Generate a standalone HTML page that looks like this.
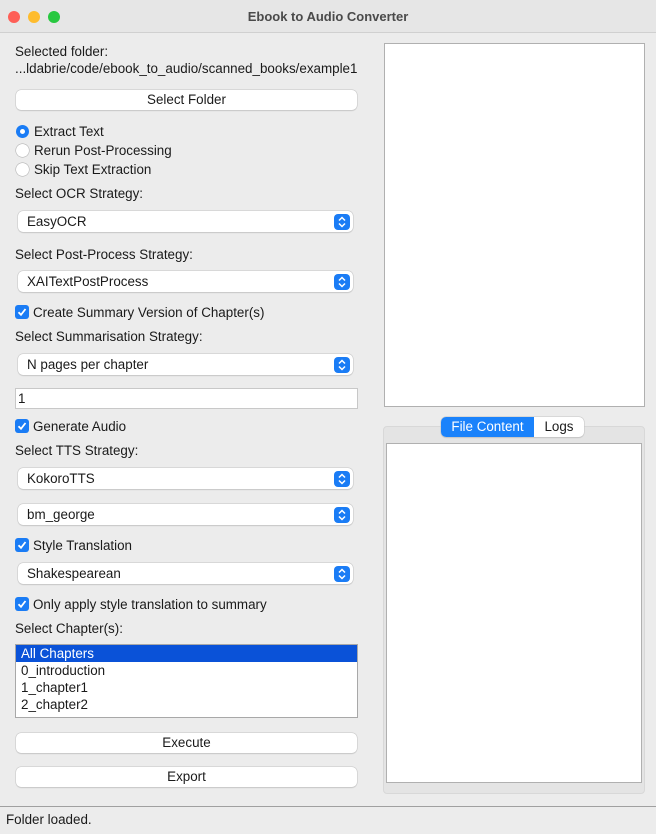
<!DOCTYPE html>
<html><head><style>
*{box-sizing:border-box;margin:0;padding:0}
body{width:656px;height:834px;background:#ececec;font-family:"Liberation Sans",sans-serif;font-size:13.4px;color:#1a1a1a;position:relative;overflow:hidden}
.a{position:absolute;white-space:nowrap}
.title{left:0;top:0;width:656px;height:33px;background:#e6e6e6;border-bottom:1px solid #d0d0d0}
.dot{position:absolute;top:11px;width:12px;height:12px;border-radius:50%}
.btn{background:#fff;border-radius:5px;box-shadow:0 0 0 .5px #c4c4c4,0 1px 1px rgba(0,0,0,.15);text-align:center;line-height:20px}
.combo{background:#fff;border-radius:5px;box-shadow:0 0 0 .5px #c4c4c4,0 1px 1px rgba(0,0,0,.15);line-height:21px;padding-left:9px}
.arr{position:absolute;right:3px;top:3px;width:16px;height:16px;background:#1a7cf5;border-radius:4px}
.radio{width:13px;height:13px;border-radius:50%;background:#fff;box-shadow:0 0 0 .5px #aaa}
.radio.on{background:#1a7cf5;box-shadow:none}
.radio.on::after{content:"";position:absolute;left:4px;top:4px;width:5px;height:5px;border-radius:50%;background:#fff}
.cb{width:14px;height:14px;border-radius:3px;background:#1a7cf5}
.box{background:#fff;border:1px solid #b8b8b8}
</style></head><body>
<div class="a title"></div>
<div class="dot" style="left:8px;background:#fe5f57"></div>
<div class="dot" style="left:28px;background:#febc2e"></div>
<div class="dot" style="left:48px;background:#28c840"></div>
<div class="a" style="left:0;width:656px;text-align:center;top:9px;font-weight:bold;color:#4a4a4a;font-size:13px">Ebook to Audio Converter</div>

<div class="a" style="left:15px;top:44px">Selected folder:</div>
<div class="a" style="left:15px;top:61px">...ldabrie/code/ebook_to_audio/scanned_books/example1</div>
<div class="a btn" style="left:16px;top:90px;width:341px;height:20px">Select Folder</div>

<div class="a radio on" style="left:16px;top:125px"></div><div class="a" style="left:34px;top:124px">Extract Text</div>
<div class="a radio" style="left:16px;top:144px"></div><div class="a" style="left:34px;top:143px">Rerun Post-Processing</div>
<div class="a radio" style="left:16px;top:163px"></div><div class="a" style="left:34px;top:162px">Skip Text Extraction</div>

<div class="a" style="left:15px;top:186px">Select OCR Strategy:</div>
<div class="a combo" style="left:18px;top:211px;width:335px;height:21px">EasyOCR<svg class="arr" viewBox="0 0 16 16"><path d="M5 6.5L8 3.5L11 6.5M5 9.5L8 12.5L11 9.5" stroke="#fff" stroke-width="1.5" fill="none"/></svg></div>
<div class="a" style="left:15px;top:247px">Select Post-Process Strategy:</div>
<div class="a combo" style="left:18px;top:271px;width:335px;height:21px">XAITextPostProcess<svg class="arr" viewBox="0 0 16 16"><path d="M5 6.5L8 3.5L11 6.5M5 9.5L8 12.5L11 9.5" stroke="#fff" stroke-width="1.5" fill="none"/></svg></div>

<svg class="a cb" style="left:15px;top:305px" viewBox="0 0 14 14"><path d="M3.5 7.2L6 9.8L10.5 4" stroke="#fff" stroke-width="1.8" fill="none"/></svg>
<div class="a" style="left:33px;top:305px">Create Summary Version of Chapter(s)</div>
<div class="a" style="left:15px;top:329px">Select Summarisation Strategy:</div>
<div class="a combo" style="left:18px;top:354px;width:335px;height:21px">N pages per chapter<svg class="arr" viewBox="0 0 16 16"><path d="M5 6.5L8 3.5L11 6.5M5 9.5L8 12.5L11 9.5" stroke="#fff" stroke-width="1.5" fill="none"/></svg></div>
<div class="a box" style="left:15px;top:388px;width:343px;height:21px;padding-left:2px;line-height:19px;border-color:#c8c8c8">1</div>

<svg class="a cb" style="left:15px;top:419px" viewBox="0 0 14 14"><path d="M3.5 7.2L6 9.8L10.5 4" stroke="#fff" stroke-width="1.8" fill="none"/></svg>
<div class="a" style="left:33px;top:419px">Generate Audio</div>
<div class="a" style="left:15px;top:443px">Select TTS Strategy:</div>
<div class="a combo" style="left:18px;top:468px;width:335px;height:21px">KokoroTTS<svg class="arr" viewBox="0 0 16 16"><path d="M5 6.5L8 3.5L11 6.5M5 9.5L8 12.5L11 9.5" stroke="#fff" stroke-width="1.5" fill="none"/></svg></div>
<div class="a combo" style="left:18px;top:504px;width:335px;height:21px">bm_george<svg class="arr" viewBox="0 0 16 16"><path d="M5 6.5L8 3.5L11 6.5M5 9.5L8 12.5L11 9.5" stroke="#fff" stroke-width="1.5" fill="none"/></svg></div>
<svg class="a cb" style="left:15px;top:538px" viewBox="0 0 14 14"><path d="M3.5 7.2L6 9.8L10.5 4" stroke="#fff" stroke-width="1.8" fill="none"/></svg>
<div class="a" style="left:33px;top:538px">Style Translation</div>
<div class="a combo" style="left:18px;top:563px;width:335px;height:21px">Shakespearean<svg class="arr" viewBox="0 0 16 16"><path d="M5 6.5L8 3.5L11 6.5M5 9.5L8 12.5L11 9.5" stroke="#fff" stroke-width="1.5" fill="none"/></svg></div>
<svg class="a cb" style="left:15px;top:597px" viewBox="0 0 14 14"><path d="M3.5 7.2L6 9.8L10.5 4" stroke="#fff" stroke-width="1.8" fill="none"/></svg>
<div class="a" style="left:33px;top:597px">Only apply style translation to summary</div>
<div class="a" style="left:15px;top:621px">Select Chapter(s):</div>
<div class="a box" style="left:15px;top:644px;width:343px;height:74px;border-color:#a8a8a8">
<div style="background:#0a52d8;color:#fff;height:17px;line-height:17px;padding-left:5px">All Chapters</div>
<div style="height:17px;line-height:17px;padding-left:5px">0_introduction</div>
<div style="height:17px;line-height:17px;padding-left:5px">1_chapter1</div>
<div style="height:17px;line-height:17px;padding-left:5px">2_chapter2</div>
</div>
<div class="a btn" style="left:16px;top:733px;width:341px;height:20px">Execute</div>
<div class="a btn" style="left:16px;top:767px;width:341px;height:20px">Export</div>

<div class="a box" style="left:384px;top:43px;width:261px;height:364px;border-color:#b0b0b0"></div>
<div class="a" style="left:383px;top:426px;width:262px;height:368px;background:#e4e4e4;border:1px solid #d8d8d8;border-radius:4px"></div>
<div class="a box" style="left:386px;top:443px;width:256px;height:340px;border-color:#b0b0b0"></div>
<div class="a" style="left:441px;top:417px;width:143px;height:20px;background:#fff;border-radius:5px;box-shadow:0 0 0 .5px #c4c4c4,0 1px 1px rgba(0,0,0,.15)"></div>
<div class="a" style="left:441px;top:417px;width:93px;height:20px;background:#1a82fb;border-radius:5px 0 0 5px;color:#fff;text-align:center;line-height:20px">File Content</div>
<div class="a" style="left:534px;top:417px;width:50px;height:20px;text-align:center;line-height:20px">Logs</div>

<div class="a" style="left:0;top:806px;width:656px;height:28px;border-top:1px solid #a0a0a0;background:#ececec"></div>
<div class="a" style="left:6px;top:812px">Folder loaded.</div>
</body></html>
